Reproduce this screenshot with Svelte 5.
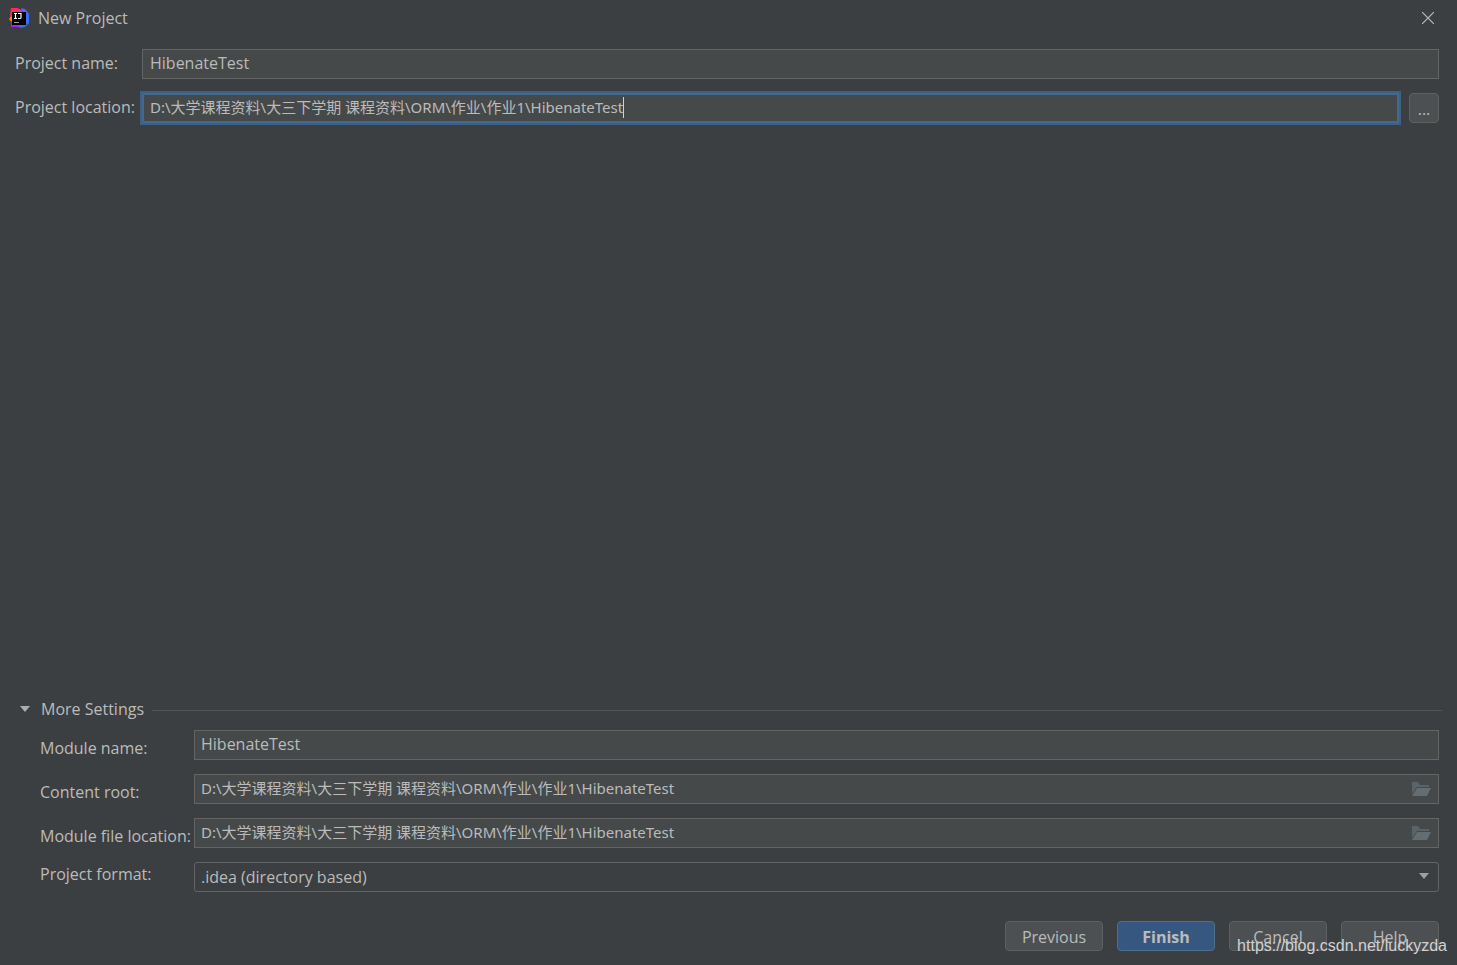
<script lang="ts">
  const path = "D:\\大学课程资料\\大三下学期 课程资料\\ORM\\作业\\作业1\\HibenateTest";

  let projectName = $state("HibenateTest");
  let projectLocation = $state(path);
  let moduleName = $state("HibenateTest");
  let contentRoot = $state(path);
  let moduleFileLocation = $state(path);
  let projectFormat = $state("idea");
  let showMore = $state(true);
</script>

{#snippet folderIcon()}
  <svg width="20" height="16" viewBox="0 0 20 16" aria-hidden="true">
    <path d="M0 1h6l2 3h9v2H5L0 13z" fill="#59646a" />
    <path d="M5 7h14l-4 8H0z" fill="#646d72" />
  </svg>
{/snippet}

<main class="dialog">
  <header class="titlebar">
    <svg class="logo" width="20" height="20" viewBox="0 0 20 20" aria-hidden="true">
      <path d="M2 0h7l3 3-3 8-6 2-2-6z" fill="#fe2857" />
      <path d="M0 11l2-3 3 3-2 4z" fill="#fc801d" />
      <path d="M2 13l8 2 1 4-9 0z" fill="#af1df5" />
      <path d="M9 1l3 1 3 3-5 2z" fill="#c341b5" />
      <path d="M12 1l5 1 3 4v9l-4 4-5 1-2-3 5-6z" fill="#3b6cf6" />
      <path d="M12 0l4 1 2 4h-4z" fill="#6b57ff" />
      <rect x="3" y="4" width="14" height="13" fill="#000" />
      <path d="M5 5.500h3M6.500 5.500v5M5 10.500h3M9 5.500h3v4q0 1-1 1h-2" fill="none" stroke="#fff" stroke-width="1.2" />
      <path d="M5 14.500h5" stroke="#999" stroke-width="1" />
    </svg>
    <h1>New Project</h1>
    <button class="close" type="button" aria-label="Close">
      <svg width="12" height="12" viewBox="0 0 12 12" aria-hidden="true">
        <path d="M0 0l12 12M12 0L0 12" stroke="#bbb" stroke-width="1.2" />
      </svg>
    </button>
  </header>

  <section class="project">
    <label for="project-name">Project name:</label>
    <div class="field">
      <input id="project-name" type="text" bind:value={projectName} />
    </div>

    <label for="project-location">Project location:</label>
    <div class="location">
      <div class="field is-focused">
        <input id="project-location" class="path" type="text" bind:value={projectLocation} />
        <span class="caret"></span>
      </div>
      <button class="btn browse" type="button">...</button>
    </div>
  </section>

  <section class="more">
    <button class="more-toggle" type="button" aria-expanded={showMore} onclick={() => (showMore = !showMore)}>
      <svg class:is-closed={!showMore} width="12" height="8" viewBox="0 0 12 8" aria-hidden="true">
        <path d="M1 0h10L6 6z" fill="#adadad" />
      </svg>
      <span>More Settings</span>
    </button>

    {#if showMore}
      <div class="settings">
        <label for="module-name">Module name:</label>
        <div class="field">
          <input id="module-name" type="text" bind:value={moduleName} />
        </div>

        <label for="content-root">Content root:</label>
        <div class="field">
          <input id="content-root" class="path" type="text" bind:value={contentRoot} />
          <button class="folder" type="button" aria-label="Browse content root">{@render folderIcon()}</button>
        </div>

        <label for="module-file">Module file location:</label>
        <div class="field">
          <input id="module-file" class="path" type="text" bind:value={moduleFileLocation} />
          <button class="folder" type="button" aria-label="Browse module file location">{@render folderIcon()}</button>
        </div>

        <label class="format-label" for="project-format">Project format:</label>
        <div class="select">
          <select id="project-format" bind:value={projectFormat}>
            <option value="idea">.idea (directory based)</option>
            <option value="ipr">.ipr (file based)</option>
          </select>
          <svg width="12" height="8" viewBox="0 0 12 8" aria-hidden="true">
            <path d="M1 0h10L6 6z" fill="#9da0a2" />
          </svg>
        </div>
      </div>
    {/if}
  </section>

  <footer class="actions">
    <button class="btn" type="button">Previous</button>
    <button class="btn btn-primary" type="button">Finish</button>
    <button class="btn" type="button">Cancel</button>
    <button class="btn" type="button">Help</button>
  </footer>

  <span class="watermark">https://blog.csdn.net/luckyzda</span>
</main>

<style>
  :global(body) {
    background: #3c3f41;
  }

  .dialog {
    box-sizing: border-box;
    display: flex;
    flex-direction: column;
    min-height: 100vh;
    padding-bottom: 14px;
    background: #3c3f41;
    color: #bbbbbb;
    font-family: "Open Sans", "Noto Sans CJK SC", sans-serif;
    font-size: 16px;
    line-height: 20px;
  }

  button,
  input,
  select {
    margin: 0;
    color: inherit;
    font: inherit;
  }

  .titlebar {
    display: flex;
    align-items: center;
    height: 36px;
    padding: 0 23px 0 9px;
  }

  .titlebar h1 {
    flex: 1;
    margin: 0 0 0 9px;
    font-size: 16px;
    font-weight: 400;
  }

  .close,
  .folder,
  .more-toggle {
    display: flex;
    align-items: center;
    padding: 0;
    border: 0;
    background: none;
  }

  .project {
    display: grid;
    grid-template-columns: 127px 1fr;
    row-gap: 14px;
    align-items: center;
    padding: 13px 18px 0 15px;
    white-space: nowrap;
  }

  .project label {
    padding-bottom: 2px;
  }

  .location {
    display: flex;
    gap: 10px;
  }

  .field,
  .select {
    box-sizing: border-box;
    display: flex;
    align-items: center;
    flex: 1;
    min-width: 0;
    height: 30px;
    padding: 0 7px;
    border: 1px solid #646464;
  }

  .field {
    background: #45494a;
  }

  .field input {
    flex: 1;
    min-width: 0;
    height: 24px;
    padding: 0 0 3px;
    border: 0;
    outline: none;
    background: none;
  }

  .field .path {
    font-family: "Noto Sans", "Noto Sans CJK SC", sans-serif;
    font-size: 15px;
  }

  .field.is-focused {
    padding: 0 6px;
    border: 2px solid #43688e;
    box-shadow: 0 0 0 2px #3d6185;
  }

  .field.is-focused input {
    flex: 0 1 auto;
    field-sizing: content;
    caret-color: transparent;
  }

  .caret {
    width: 1px;
    height: 21px;
    margin-bottom: 2px;
    background: #d0d0d0;
  }

  .more {
    margin-top: auto;
    white-space: nowrap;
  }

  .more-toggle {
    gap: 10px;
    width: 100%;
    padding: 0 15px 0 19px;
  }

  .more-toggle span {
    padding-bottom: 2px;
  }

  .more-toggle::after {
    content: "";
    flex: 1;
    height: 1px;
    margin-left: -2px;
    background: #555555;
  }

  .more-toggle .is-closed {
    transform: rotate(-90deg);
  }

  .settings {
    display: grid;
    grid-template-columns: 154px 1fr;
    row-gap: 14px;
    padding: 9px 18px 0 40px;
  }

  .settings label {
    padding-top: 8px;
  }

  .settings .format-label {
    padding-top: 2px;
  }

  .settings .field,
  .settings .select {
    padding: 0 6px;
  }

  .select {
    position: relative;
    border-radius: 3px;
  }

  .select select {
    appearance: none;
    flex: 1;
    min-width: 0;
    padding: 0;
    border: 0;
    outline: none;
    background: #3c3f41;
  }

  .select svg {
    position: absolute;
    right: 8px;
    pointer-events: none;
  }

  .actions {
    display: flex;
    justify-content: flex-end;
    gap: 14px;
    padding: 29px 18px 0;
  }

  .btn {
    box-sizing: border-box;
    width: 98px;
    height: 30px;
    padding: 2px 0 0;
    border: 1px solid #5e6060;
    border-radius: 4px;
    background: #4c5052;
  }

  .browse {
    width: 30px;
  }

  .btn-primary {
    border-color: #4c708c;
    background: #365880;
    font-weight: 700;
  }

  .watermark {
    position: absolute;
    right: 10px;
    bottom: 10px;
    color: #d2d2d2;
    font-family: "Liberation Sans", Arial, sans-serif;
    font-size: 16px;
    line-height: 18px;
    pointer-events: none;
  }
</style>
